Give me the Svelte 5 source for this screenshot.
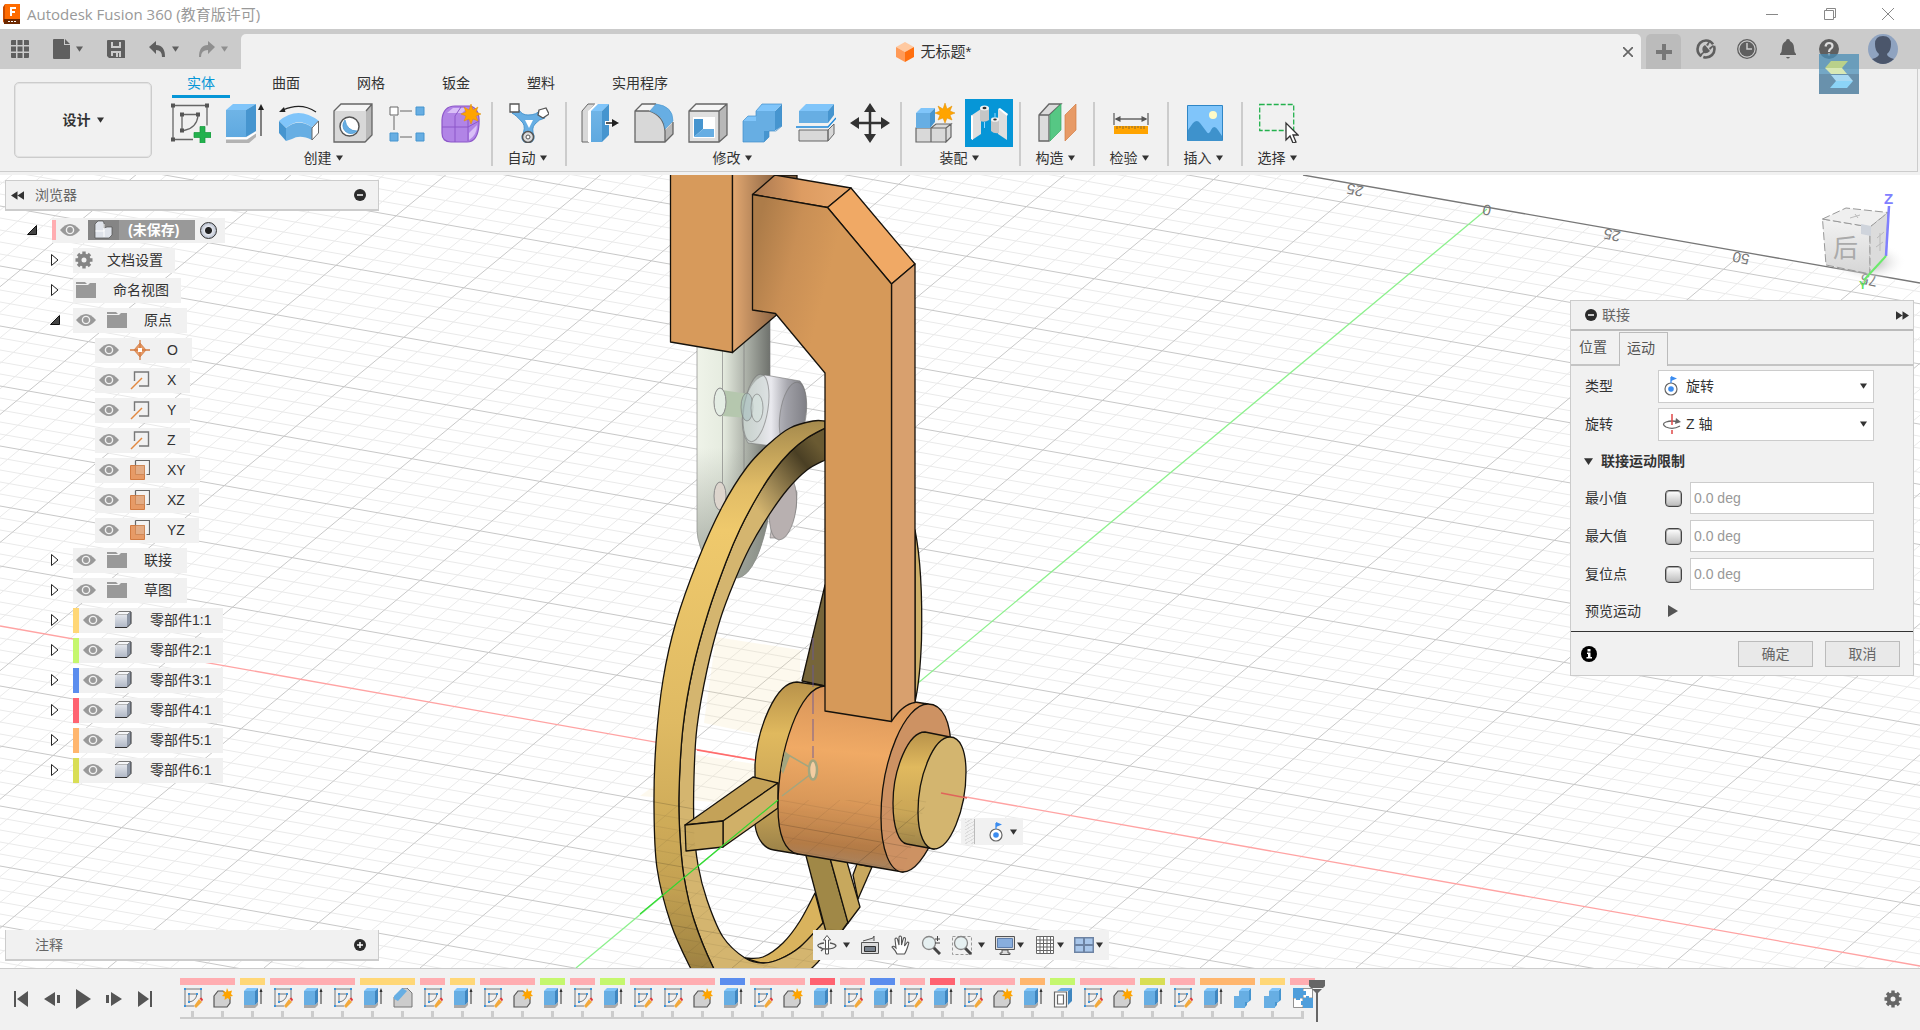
<script>
  const tabs = ['实体', '曲面', '网格', '钣金', '塑料', '实用程序'];

  const groups = [
    { label: '创建', wide: true, tools: ['sketch', 'extrude', 'revolve', 'hole', 'rect', 'form'] },
    { label: '自动', tools: ['auto'] },
    { label: '修改', wide: true, tools: ['press', 'fillet', 'shell', 'combine', 'split', 'move'] },
    { label: '装配', wide: true, tools: ['newcomp', 'joint'] },
    { label: '构造', tools: ['construct'] },
    { label: '检验', tools: ['measure'] },
    { label: '插入', tools: ['insert'] },
    { label: '选择', tools: ['select'] },
  ];

  const tree = [
    { cls: 'l1', icons: ['gear'], text: '文档设置', closed: true, kind: 'doc' },
    { cls: 'l1', icons: ['folder'], text: '命名视图', closed: true, kind: 'views' },
    { cls: 'l1', icons: ['eye', 'folder'], text: '原点', open: true, kind: 'fold' },
    { cls: 'l2', icons: ['eye', 'point'], text: 'O' },
    { cls: 'l2', icons: ['eye', 'axis'], text: 'X' },
    { cls: 'l2', icons: ['eye', 'axis'], text: 'Y' },
    { cls: 'l2', icons: ['eye', 'axis'], text: 'Z' },
    { cls: 'l2', icons: ['eye', 'plane'], text: 'XY' },
    { cls: 'l2', icons: ['eye', 'plane'], text: 'XZ' },
    { cls: 'l2', icons: ['eye', 'plane'], text: 'YZ' },
    { cls: 'l1', icons: ['eye', 'folder'], text: '联接', closed: true, kind: 'fold' },
    { cls: 'l1', icons: ['eye', 'folder'], text: '草图', closed: true, kind: 'fold' },
    ...['yellow', 'green', 'blue', 'red', 'orange', 'olive'].map((color, i) => ({
      cls: 'l1', icons: ['eye', 'body'], text: `零部件${i + 1}:1`, closed: true, color, kind: 'comp',
    })),
  ];

  const limits = [
    { id: 'min', label: '最小值' },
    { id: 'max', label: '最大值' },
    { id: 'rest', label: '复位点' },
  ];

  // [colour, number of slots]
  const runs = [
    ['pink', 2], ['yellow', 1], ['pink', 3], ['yellow', 2], ['pink', 1], ['yellow', 1], ['pink', 2],
    ['green', 1], ['pink', 1], ['green', 1], ['pink', 3], ['blue', 1], ['pink', 2], ['red', 1],
    ['pink', 1], ['blue', 1], ['pink', 1], ['red', 1], ['pink', 2], ['orange', 1], ['green', 1],
    ['pink', 2], ['olive', 1], ['pink', 1], ['orange', 2], ['yellow', 1], ['pink', 1],
  ];
  const kinds = { s: 't-sketch', c: 't-comp', e: 't-extrude', f: 't-chamfer', b: 't-shell', m: 't-combine', j: 't-joint' };
  const features = [...'scesesefsescesesscescesesescebscesemmj'].map((k) => kinds[k]);

  // Ground grid: two families of nearly parallel lines, five minor cells per major cell.
  const lineA = (k) => `M0 ${626 + 60 * k}L1920 ${966 + 60.2 * k}`;
  const lineB = (k) => `M${576 + 156 * k} 968L${1487 + 127.5 * k} ${209 + 22.4 * k}`;
  let minor = '';
  let major = '';
  for (let i = -56; i <= 29; i++) {
    if (i % 5 === 0) { if (i) major += lineA(i / 5); }
    else minor += lineA(i / 5);
  }
  for (let i = -52; i <= 48; i++) {
    if (i % 5 === 0) { if (i) major += lineB(i / 5); }
    else minor += lineB(i / 5);
  }

  // Catmull-Rom spline through the points, without its first move command.
  function curve(p) {
    let d = '';
    for (let i = 0; i < p.length - 1; i++) {
      const a = p[i - 1] ?? p[i], b = p[i], c = p[i + 1], e = p[i + 2] ?? c;
      d += `C${b[0] + (c[0] - a[0]) / 6} ${b[1] + (c[1] - a[1]) / 6} ${c[0] - (e[0] - b[0]) / 6} ${c[1] - (e[1] - b[1]) / 6} ${c[0]} ${c[1]}`;
    }
    return d;
  }
  const open = (p) => `M${p[0]}${curve(p)}`;
  const band = (a, b) => {
    const r = [...b].reverse();
    return `${open(a)}L${r[0]}${curve(r)}Z`;
  };
  const outer = [[825, 421], [813, 421], [790, 428], [770, 443], [747, 467], [722, 507], [698, 560], [676, 622], [663, 680], [656, 743], [654, 805], [657, 868], [671, 924], [690, 967], [704, 990]];
  const middle = [[825, 428], [807, 438], [790, 452], [773, 472], [757, 497], [740, 529], [726, 562], [708, 613], [693, 668], [683, 727], [679, 793], [680, 837], [684, 877], [694, 920], [713, 967], [728, 990]];
  const inner = [[825, 460], [807, 470], [787, 490], [767, 518], [750, 547], [735, 580], [720, 620], [707, 670], [697, 727], [694, 777], [694, 827], [698, 865], [707, 900], [723, 937], [745, 958], [763, 963], [780, 959], [800, 947], [823, 923]];
  const middleLow = [...middle, [760, 1000], [790, 985], [813, 967], [826, 952], [848, 923]];
  const innerBack = [[745, 958], [763, 957], [783, 943], [800, 921], [815, 893]];
  const innerFront = [[745, 958], [763, 963], [780, 959], [800, 947], [823, 923]];
  const ringA = band(outer, middle);
  const ringB = band(middleLow, inner);
  const barrel = 'M825 686C800 686 778 750 778 807C778 835 785 852 798 854L903 872L940 760L928 704L915 702Z';
</script>

{#snippet ic(name, cls = 'i20', box = '0 0 20 20')}
  <svg class={cls} viewBox={box} aria-hidden="true"><use href="#{name}" /></svg>
{/snippet}
{#snippet caret()}
  <svg class="caret" viewBox="0 0 8 6" aria-hidden="true"><path d="M0 0h8L4 6z" fill="currentColor" /></svg>
{/snippet}

<svg class="defs" aria-hidden="true">
  <defs>
    <linearGradient id="gblue" x1="0" y1="0" x2="0" y2="1"><stop offset="0" stop-color="#6fb4e6" /><stop offset="1" stop-color="#5fa9e0" /></linearGradient>
    <linearGradient id="gbody" x1="0" y1="0" x2="0" y2="1"><stop offset="0" stop-color="#e3e6ec" /><stop offset="1" stop-color="#aeb6c4" /></linearGradient>
  </defs>
  <symbol id="sketch" viewBox="0 0 40 40">
    <g fill="none" stroke="#666" stroke-width="1.3"><path d="M2 2.5h34v20M2 2.5v34h20M11 11.5h16M11 11.5v16M27 13c-1 8-6 13-14 14.500" /></g>
    <path fill="#555" d="M0 .5h4v4H0zM34 .5h4v4h-4zM0 34.500h4v4H0zM9 9.500h4v4H9zM25 9.500h4v4h-4zM9 25.500h4v4H9z" />
    <path fill="#23b14d" stroke="#15963a" stroke-width=".7" d="M29 23.500h5v6h6v5h-6v6h-5v-6h-6v-5h6z" />
  </symbol>
  <symbol id="extrude" viewBox="0 0 40 40">
    <path fill="#b3b3b3" d="M1 35h20l10-6v5l-7 6H1z" />
    <path fill="#fff" d="M1 34.500h20l10-6v2l-9 6H1z" />
    <path fill="url(#gblue)" d="M1 7h20v27H1z" /><path fill="#80c5fa" d="M1 7l7-6h23L21 7z" /><path fill="#4695cf" d="M21 7l10-6v27l-10 6z" />
    <path stroke="#222" stroke-width="1.100" d="M36 33V5" /><path fill="#222" d="M33 7l3-6 3 6z" />
  </symbol>
  <symbol id="revolve" viewBox="0 0 40 40">
    <path fill="#80c5fa" d="M0 18Q19 2 40 18l-7 6Q19 14 7 25z" /><path fill="#67aee3" d="M7 25q12-10 26-1v13q-12-6-20-1l-6 2z" /><path fill="#4695cf" d="M0 18l7 7v13l-7-8z" />
    <path fill="#fff" stroke="#666" d="M33 25l6.500-7v12L33 37z" /><path fill="none" stroke="#222" stroke-width="1.200" d="M37 9Q22-1 4 7" /><path fill="#222" d="M0 9l5-5 1.500 5z" />
  </symbol>
  <symbol id="hole" viewBox="0 0 40 40">
    <path fill="#f5f5f5" d="M1 8l7-7h31l-6 7z" /><path fill="#b8b8b8" d="M33 8l6-7v31l-6 7z" /><path fill="#d8d8d8" d="M1 8h32v31H1z" /><path fill="none" stroke="#666" stroke-width="1.300" d="M1 8l7-7h31v31l-7 7H1zM33 8l6-7" />
    <circle cx="16.500" cy="23.500" r="9.500" fill="#fff" stroke="#555" stroke-width="1.500" /><path fill="#67aee3" stroke="#4695cf" stroke-width=".7" d="M12 17a8 8 0 1 0 12 11Q14 28 12 17z" />
  </symbol>
  <symbol id="rect" viewBox="0 0 40 40">
    <path stroke="#666" d="M13 8h12M13 34h12M7 13v14" /><path fill="#fff" stroke="#666" d="M3 4h8v8H3z" /><path fill="#67aee3" stroke="#4695cf" d="M29 4h8v8h-8zM29 30h8v8h-8zM3 30h8v8H3z" />
  </symbol>
  <symbol id="star" viewBox="0 0 20 20"><path fill="#ffa400" stroke="#e08e00" stroke-width=".5" d="M10 0l2 6 5-3-2 5 5 2-5 2 2 5-5-2-2 5-2-5-5 2 2-5-5-2 5-2-2-5 5 3z" /></symbol>
  <symbol id="form" viewBox="0 0 40 40">
    <path fill="#b184e6" stroke="#8c57c9" stroke-width="1.200" d="M1 17Q2 3 14 3h15q10 2 9 18-1 18-12 18H10Q1 39 1 30z" /><path fill="#d9bff7" d="M6 10l6-5h14l-5 5zM28 30l8-8q0 10-8 15z" />
    <path fill="none" stroke="#8c57c9" d="M1 24h26l11-6M14 39V13l6-9M27 13v25" /><use href="#star" x="20" y="1" width="20" height="20" />
  </symbol>
  <symbol id="auto" viewBox="0 0 40 40">
    <path fill="#67aee3" stroke="#4695cf" d="M3 10q4 2 11 10 3 5-1 13-1 6 6 7 7-1 6-7-3-8 1-12 4-5 10-6l-5-8q-3 5-12 5-6 0-9-5z" /><path fill="#fff" d="M16 17h8l-4 8z" />
    <path fill="#fff" stroke="#555" stroke-width="1.300" d="M1 1h9v8H1zM30 7l7-2 3 6-6 4-5-3z" /><circle cx="19" cy="34" r="5.500" fill="#ddd" stroke="#555" stroke-width="1.500" /><circle cx="19" cy="34" r="2" fill="#fff" stroke="#555" />
  </symbol>
  <symbol id="press" viewBox="0 0 40 40">
    <path fill="#d9d9d9" stroke="#666" d="M2 8l6-7h7L9 8v31H2z" /><path fill="#fff" d="M8 8l7-7h3l-7 7v31H8z" /><path fill="url(#gblue)" d="M11 8h11v31H11z" /><path fill="#80c5fa" d="M11 8l7-7h11l-7 7z" /><path fill="#4695cf" d="M22 8l7-7v31l-7 7z" />
    <path stroke="#fff" stroke-width="4" d="M25 20h13" /><path stroke="#222" stroke-width="1.500" d="M26 20h8" /><path fill="#222" d="M32 16l7 4-7 4z" />
  </symbol>
  <symbol id="fillet" viewBox="0 0 40 40">
    <path fill="#f5f5f5" d="M1 8l7-7h12L15 8z" /><path fill="#d8d8d8" d="M1 8h14q16 5 16 22v9H1z" /><path fill="#b8b8b8" d="M31 27l8-8v12l-8 8z" /><path fill="none" stroke="#666" stroke-width="1.300" d="M22 1H8L1 8v31h30l8-8V19M1 8h14q15 5 16 20v11" /><path fill="#67aee3" stroke="#4695cf" stroke-width=".6" d="M22 1q17 2 17 17l-8 8Q30 12 16 8z" />
  </symbol>
  <symbol id="shell" viewBox="0 0 40 40">
    <path fill="#f5f5f5" d="M1 8l7-7h31l-6 7z" /><path fill="#b8b8b8" d="M31 8l8-7v31l-8 7z" /><path fill="#e0e0e0" d="M1 8h30v31H1z" /><path fill="none" stroke="#666" stroke-width="1.300" d="M1 8l7-7h31v31l-8 7H1zM31 8v31M1 8h30l8-7" /><path fill="#fff" d="M5 14h22v21H5z" /><path fill="#4695cf" d="M6 16h9v10l-9 8z" /><path fill="#67aee3" d="M6 34l9-8h11v8z" />
  </symbol>
  <symbol id="combine" viewBox="0 0 40 40">
    <path fill="#4695cf" d="M33 8l7-7v22l-6 4h-7v7l-5 5V15z" /><path fill="#67aee3" d="M1 18h13V8h19v20H22v11H1z" /><path fill="#80c5fa" d="M14 8l6-7h20l-7 7zM1 18l5-5h8v5z" /><path fill="none" stroke="#3f8dc9" stroke-width=".7" d="M1 18l5-5h8V8l6-7h20v22l-6 5h-7v6l-5 5H1z" />
  </symbol>
  <symbol id="split" viewBox="0 0 40 40">
    <path fill="#67aee3" d="M3 8h29v12H3z" /><path fill="#80c5fa" d="M3 8l7-7h28l-6 7z" /><path fill="#4695cf" d="M32 8l6-7v11l-6 8z" /><path fill="none" stroke="#1b87d9" stroke-width="1.300" d="M0 24h32l8-9" /><path fill="#d8d8d8" stroke="#666" d="M3 27h29v11H3zM32 27l6-6v10l-6 7z" />
  </symbol>
  <symbol id="move" viewBox="0 0 40 40"><path stroke="#333" stroke-width="2.500" d="M20 6v28M6 20h28" /><path fill="#333" d="M20 0l6 9H14zM20 40l6-9H14zM0 20l9-6v12zM40 20l-9-6v12z" /></symbol>
  <symbol id="newcomp" viewBox="0 0 40 40">
    <path fill="#d9d9d9" stroke="#666" stroke-width="1.200" d="M1 25h15v14H1zM16 25l5-4h15l-5 4zM16 25h15v14H16zM31 25l5-4v13l-5 5z" /><path fill="#67aee3" d="M1 10h14v15H1z" /><path fill="#80c5fa" d="M1 10l5-5h14l-5 5z" /><path fill="#4695cf" d="M15 10l5-5v14l-5 6z" /><use href="#star" x="20" y="0" width="20" height="20" />
  </symbol>
  <symbol id="joint" viewBox="0 0 40 40">
    <path fill="#dedede" d="M3 12l9-6v25l-9 6z" /><path fill="#c6c6c6" d="M11 5h9v12q-4 3-9 1z" /><ellipse cx="15.500" cy="5" rx="4.500" ry="2.500" fill="#f4f4f4" />
    <path fill="#dedede" d="M38 12l-9-6v25l9 6z" /><path fill="#c6c6c6" d="M22 17h8v13q-5 1-8-2z" /><ellipse cx="26" cy="16.500" rx="4" ry="2.300" fill="#f4f4f4" />
    <path fill="#fff" d="M2 12l2 1v24l-2-1zM29 6l2-1 8 6-1 2z" /><ellipse cx="15.500" cy="5" rx="2" ry="1.200" fill="#333" /><ellipse cx="26" cy="16.500" rx="1.800" ry="1" fill="#333" /><path stroke="#8fd6ff" d="M15.500 19v6M26 10v5" />
  </symbol>
  <symbol id="construct" viewBox="0 0 40 40">
    <path fill="#dcdcdc" stroke="#666" stroke-width="1.300" d="M2 12L12 1h12L12 12v26H2zM2 12h10" /><path fill="#56c784" stroke="#3aa966" stroke-width=".7" d="M13 12L24 1v26L13 38z" /><path fill="#e79a66" stroke="#d27b42" stroke-width=".7" d="M28 12L39 1v26L28 38z" />
  </symbol>
  <symbol id="measure" viewBox="0 0 40 40">
    <path stroke="#666" stroke-width="1.300" d="M3 10v12M37 10v12M5 16h30" /><path fill="#555" d="M3.500 16l6-3v6zM36.500 16l-6-3v6z" /><path fill="#ffa400" d="M3 23h34v8H3z" /><path stroke="#8b6a2f" d="M6 23v3M9 23v2M12 23v3M15 23v2M18 23v3M21 23v2M24 23v3M27 23v2M30 23v3M33 23v3" />
  </symbol>
  <symbol id="insert" viewBox="0 0 40 40"><path fill="#80c5fa" stroke="#2f86c6" d="M2.500 2.500h35v35h-35z" /><circle cx="28" cy="12" r="4" fill="#fffbc8" /><path fill="#3e92cc" d="M3 27l5-7q4-4 7 0l6 8q3 5 5-1 3-6 7 0l4 6v5H3z" /></symbol>
  <symbol id="select" viewBox="0 0 40 40"><path fill="none" stroke="#23b14d" stroke-width="1.300" stroke-dasharray="5 2" d="M.7 1.500h34v26H.7z" /><path fill="#fff" stroke="#333" stroke-width="1.300" d="M27 20v17l4-4 3 7 3-1-3-7h5z" /></symbol>

  <symbol id="eye" viewBox="0 0 20 20"><path fill="#999" d="M0 10Q10-2 20 10 10 22 0 10z" /><circle cx="10" cy="10" r="3.600" fill="none" stroke="#f1f1f1" stroke-width="1.400" /></symbol>
  <symbol id="folder" viewBox="0 0 20 20"><path fill="#999" d="M0 2h9l2 2H0zM0 5h12l2-2h6v15H0z" /></symbol>
  <symbol id="gear" viewBox="0 0 20 20"><circle cx="10" cy="10" r="4.500" fill="none" stroke="currentColor" stroke-width="4" /><path stroke="currentColor" stroke-width="3.400" d="M10 1.500v3M10 15.500v3M1.500 10h3M15.500 10h3M4 4l2 2M14 14l2 2M4 16l2-2M14 6l2-2" /></symbol>
  <symbol id="point" viewBox="0 0 20 20"><path fill="#e79a66" stroke="#d27b42" stroke-width=".8" d="M10 3l6 7-6 7-6-7z" /><path stroke="#d27b42" stroke-width="1.300" d="M10 0v20M0 10h20" /><path fill="#fff" d="M8 8h4v4H8z" /></symbol>
  <symbol id="axis" viewBox="0 0 20 20"><path fill="none" stroke="#777" stroke-width="1.400" d="M4.500 11V2h14v14H9" /><path stroke="#e2873f" stroke-width="1.400" d="M1 19L12 8" /></symbol>
  <symbol id="plane" viewBox="0 0 20 20"><path fill="#e79a66" stroke="#d27b42" d="M.5 5.500h14v14H.5z" /><path fill="#ffffff33" stroke="#666" stroke-width="1.200" d="M5.500.5h14v14h-3M5.500.5v5" /><path fill="#e3ac85" stroke="#c98352" stroke-width=".8" d="M5.500 5.500h9v9h-9z" /></symbol>
  <symbol id="body" viewBox="0 0 20 20"><path fill="#f6f7f9" stroke="#777" d="M2 5l4-3.500h12L14 5z" /><path fill="url(#gbody)" d="M2 5h12v12.500H2z" /><path fill="#8d96a5" d="M14 5l4-3.500v12l-4 4z" /><path fill="none" stroke="#333" d="M2 17.500h12l4-4V2" /></symbol>
  <symbol id="assembly" viewBox="0 0 20 20"><path fill="#dfe3ea" stroke="#4d4d4d" stroke-width=".7" d="M1 4l3-3h5l1 2v5l3-1h5v8l-3 3H1z" /><path fill="none" stroke="#fff" d="M1.500 11h8.500V4M10 10v7" /></symbol>
  <symbol id="minus" viewBox="0 0 12 12"><circle cx="6" cy="6" r="6" fill="#2b2b2b" /><path stroke="#fff" stroke-width="1.500" d="M3 6h6" /></symbol>
  <symbol id="plus" viewBox="0 0 12 12"><circle cx="6" cy="6" r="6" fill="#2b2b2b" /><path stroke="#fff" stroke-width="1.500" d="M3 6h6M6 3v6" /></symbol>
  <symbol id="revjoint" viewBox="0 0 20 20"><circle cx="9" cy="13" r="6" fill="#fff" stroke="#666" stroke-width="1.200" /><circle cx="9" cy="13" r="2.800" fill="#3b8cf0" /><path stroke="#3b8cf0" stroke-width="1.300" d="M9 7V1" /><path fill="#3b8cf0" d="M9 0l6 2.500L9 5z" /></symbol>
  <symbol id="zaxis" viewBox="0 0 20 20"><path fill="none" stroke="#666" stroke-width="1.300" d="M18 12q-7 4-14 1-5-3 0-5 6-2 12 0" /><path fill="#666" d="M14 4l5 4-6 2z" /><path stroke="#e04848" stroke-width="1.500" d="M10 0v11M10 16v4" /></symbol>

  <symbol id="t-sketch" viewBox="0 0 20 20"><path fill="none" stroke="#777" d="M2 1v17M2 1h16M18 1v10M2 18h9M6 6h8M6 6v8M14 6q-1 7-8 8" /><path fill="#3b94dd" d="M1 0h2v2H1zM17 0h2v2h-2zM1 17h2v2H1zM5 5h2v2H5zM13 5h2v2h-2zM5 13h2v2H5z" /><path fill="#f2a93b" d="M16 11l3 3-6 6-2-2z" /><path fill="#e23b3b" d="M16.500 10.500l2-1 1.500 2-1 2z" /></symbol>
  <symbol id="t-comp" viewBox="0 0 20 20"><path fill="#d0d0d0" stroke="#555" stroke-width="1.200" d="M1 8l4-5h5l7 6v6l-3 4H1z" /><path fill="#ffa400" d="M14 0l1.500 3.500L19 2.500l-1 3.500 2 2-3 .5.500 3.500-3-2-3 2 .500-3.500-3-.500 2-2-1-3 3 1z" /></symbol>
  <symbol id="t-extrude" viewBox="0 0 20 20"><path fill="#aaa" d="M1 17h11l3-3v3l-3 3H1z" /><path fill="#67aee3" d="M1 3h11v14H1z" /><path fill="#80c5fa" d="M1 3l3-3h11l-3 3z" /><path fill="#4087c0" d="M12 3l3-3v14l-3 3z" /><path stroke="#333" d="M18 2v14" /><path fill="#333" d="M16.500 4L18 0l1.500 4z" /></symbol>
  <symbol id="t-chamfer" viewBox="0 0 20 20"><path fill="#ccc" stroke="#777" d="M1 9L10 0h4l5 5v14H1z" /><path fill="#67aee3" d="M1 8L9 0l5 3-9 10-4-2z" /></symbol>
  <symbol id="t-shell" viewBox="0 0 20 20"><path fill="#67aee3" d="M4 3l4-3h11l-4 3z" /><path fill="#4087c0" d="M15 3l4-3v13l-4 4z" /><path fill="#fff" stroke="#666" stroke-width="1.200" d="M1.500 4h12v15h-12zM4.500 7h6v9h-6z" /></symbol>
  <symbol id="t-combine" viewBox="0 0 20 20"><path fill="#4695cf" d="M15 3l3-3v12l-4 3v2l-3 3V7z" /><path fill="#67aee3" d="M1 8h5V3h10v11h-4v6H1z" /><path fill="#80c5fa" d="M6 3l3-3h9l-3 3z" /></symbol>
  <symbol id="t-joint" viewBox="0 0 20 20"><path fill="#fff" stroke="#777" stroke-width=".8" d="M10 .5h9.500V10H10zM.5 10H10v9.500H.5z" /><path fill="#4f9edb" d="M0 0h10v3h3v4h-3v3H7v2H3v-2H0zM10 13h-2v4h2v3h10V10h-4V8h-3v2h-3z" /></symbol>
</svg>

<div class="app">
  <header class="title">
    <svg class="i20" viewBox="0 0 20 20" aria-hidden="true"><path fill="#ff6b00" d="M3 0h15v16H3z" /><path fill="#c94b00" d="M1 3l2-3v16l-2 3z" /><path fill="#6d2900" d="M2 15h16v5H2z" /><path fill="none" stroke="#fff" stroke-width="2" d="M9 12V4h5M9 8h4" /><path stroke="#fff" stroke-dasharray="2 1" d="M6 17.500h8" /></svg>
    <h1>Autodesk Fusion 360 (教育版许可)</h1>
    <div class="window">
      <button aria-label="最小化"><svg viewBox="0 0 12 12"><path d="M0 6.500h12" /></svg></button>
      <button aria-label="还原"><svg viewBox="0 0 12 12"><path d="M.5 2.500h9v9h-9zM2.500 2.500v-2h9v9h-2" /></svg></button>
      <button aria-label="关闭"><svg viewBox="0 0 12 12"><path d="M0 0l12 12M12 0L0 12" /></svg></button>
    </div>
  </header>

  <div class="tabbar">
    <div class="quick">
      <button aria-label="数据面板"><svg viewBox="0 0 18 18"><path d="M0 1q0-1 1-1h4v5H0zM6.500 0h5v5h-5zM13 0h4q1 0 1 1v4h-5zM0 6.500h5v5H0zM6.500 6.500h5v5h-5zM13 6.500h5v5h-5zM0 13h5v5H1q-1 0-1-1zM6.500 13h5v5h-5zM13 13h5v4q0 1-1 1h-4z" /></svg></button>
      <button class="drop" aria-label="文件"><svg viewBox="0 0 18 20"><path d="M1 0h10v6h6v13q0 1-1 1H1q-1 0-1-1V1q0-1 1-1zM12 0l5 5h-5z" /></svg>{@render caret()}</button>
      <button aria-label="保存"><svg viewBox="0 0 18 18"><path fill-rule="evenodd" d="M1 0h16q1 0 1 1v17H2l-2-2V1q0-1 1-1zM4 2v6h10V2h-2v4H6V2zM4 11v5h2v-3h3v4h2v-4h1v4h2v-6z" /></svg></button>
      <button class="drop" aria-label="撤消"><svg viewBox="0 0 18 16"><path d="M0 6l7-6v4q9 0 9 12h-3q0-7-6-7v4z" /></svg>{@render caret()}</button>
      <button class="drop off" aria-label="恢复"><svg viewBox="0 0 18 16"><path d="M17 6l-7-6v4Q1 4 1 16h2q0-7 7-7v4z" /></svg>{@render caret()}</button>
    </div>
    <div class="doctab">
      <span class="docname"><svg class="i20" viewBox="0 0 20 20" aria-hidden="true"><path fill="#ffc9a0" d="M10 0l9 5-9 5-9-5z" /><path fill="#ff9a57" d="M1 5l9 5v10l-9-5z" /><path fill="#ff6f0f" d="M19 5l-9 5v10l9-5z" /></svg>无标题*</span>
      <button aria-label="关闭文档"><svg viewBox="0 0 10 10"><path stroke="#666" stroke-width="1.700" d="M0 0l10 10M10 0L0 10" /></svg></button>
    </div>
    <button class="newtab" aria-label="新建"><svg viewBox="0 0 16 16"><path d="M6 0h4v6h6v4h-6v6H6v-6H0V6h6z" /></svg></button>
    <div class="status">
      <button aria-label="扩展"><svg viewBox="0 0 20 20"><circle cx="10" cy="10" r="8.500" fill="none" stroke="#5f5f5f" stroke-width="2.600" stroke-dasharray="16 2 30 2" /><path d="M3 16l4-3q-2-5 2-7l5 6q-3 3-6 2l-4 4zM10 6l3-4 1 1-2 4zM13 9l4-3 1 1-4 4z" /></svg></button>
      <button aria-label="作业状态"><svg viewBox="0 0 20 20"><circle cx="10" cy="10" r="9.300" fill="none" stroke="#5f5f5f" stroke-width="1.300" /><circle cx="10" cy="10" r="7.500" /><path fill="none" stroke="#ccc" stroke-width="1.500" d="M10 4v6h5" /></svg></button>
      <button aria-label="通知"><svg viewBox="0 0 20 20"><path d="M10 0q2 0 2 2 4 2 4 7 0 4 2 6v1H2v-1q2-2 2-6 0-5 4-7 0-2 2-2zM8 18h4q-2 3-4 0z" /></svg></button>
      <button class="help" aria-label="帮助"><svg viewBox="0 0 20 20"><circle cx="10" cy="10" r="10" /><path fill="none" stroke="#ddd" stroke-width="2.200" d="M6.500 7.500q.5-3.500 3.500-3.500 3.500 0 3.500 3 0 2-2 3-1.500 1-1.500 3M10 14.500v2" /></svg>
        <svg class="badge" viewBox="0 0 40 40"><path fill="#4a8db5" fill-opacity=".75" d="M0 0h40v40H0z" /><path fill="#5d7c93" fill-opacity=".5" d="M0 20h40v20H0z" /><path fill="#b9d08a" d="M12 7h17l-6 7H6z" /><path fill="#d8e8b5" d="M6 14h17l5 6H12z" /><path fill="#a9d9f2" d="M12 21h17l5 6H17z" /><path fill="#8cd4f7" d="M17 27h17l-6 7H11z" /></svg>
      </button>
      <button class="avatar" aria-label="账户"><svg viewBox="0 0 30 30"><circle cx="15" cy="15" r="15" fill="#8fa3c0" /><path fill="#4b566b" d="M7 10q0-8 8-8t8 8q0 7-4 10 0 3 7 5-11 10-22 0 7-2 7-5-4-3-4-10z" /></svg></button>
    </div>
  </div>

  <div class="ribbon">
    <button class="design">设计 {@render caret()}</button>
    <div class="ribmain">
      <nav>
        {#each tabs as t, i}<button class:active={i === 0}>{t}</button>{/each}
      </nav>
      <div class="groups">
        {#each groups as g}
          <div class="group" class:wide={g.wide}>
            <div class="tools">
              {#each g.tools as t}
                <button class="tool" class:on={t === 'joint'} aria-label={t}>{@render ic(t, 'i40', '0 0 40 40')}</button>
              {/each}
            </div>
            <button class="glabel">{g.label} {@render caret()}</button>
          </div>
        {/each}
      </div>
    </div>
  </div>

  <main>
    <svg class="scene" viewBox="0 175 1920 793" preserveAspectRatio="xMidYMid slice" role="img" aria-label="模型">
      <defs>
        <clipPath id="ground"><path d="M0 175H1303L1920 283V968H0z" /></clipPath>
        <clipPath id="lower"><path d="M640 800h340v170H640z" /></clipPath>
        <clipPath id="solid"><path d={ringA} /><path d={ringB} /><path d={barrel} /></clipPath>
        <linearGradient id="gx" x1="0" x2="1"><stop offset="0" stop-color="#e2a871" /><stop offset="1" stop-color="#8a6342" /></linearGradient>
        <linearGradient id="garm" gradientUnits="userSpaceOnUse" x1="752" y1="250" x2="830" y2="270"><stop offset="0" stop-color="#ad7c49" /><stop offset=".5" stop-color="#c98f55" /><stop offset="1" stop-color="#d69959" /></linearGradient>
        <linearGradient id="gtop" x1="0" x2="1"><stop offset="0" stop-color="#a97850" /><stop offset=".5" stop-color="#dd9c62" /><stop offset="1" stop-color="#e8a86c" /></linearGradient>
        <linearGradient id="gra" gradientUnits="userSpaceOnUse" x1="0" y1="421" x2="0" y2="968"><stop offset="0" stop-color="#a58a4d" /><stop offset=".12" stop-color="#e1bc66" /><stop offset=".2" stop-color="#efc96c" /><stop offset=".55" stop-color="#dfba63" /><stop offset=".85" stop-color="#c4a253" /><stop offset="1" stop-color="#9e8242" /></linearGradient>
        <linearGradient id="grb" gradientUnits="userSpaceOnUse" x1="826" y1="455" x2="758" y2="510"><stop offset="0" stop-color="#6a5a32" /><stop offset=".25" stop-color="#4a3f24" /><stop offset=".75" stop-color="#a8905a" /><stop offset="1" stop-color="#d4b56f" /></linearGradient>
        <linearGradient id="gbar" gradientUnits="userSpaceOnUse" x1="830" y1="690" x2="815" y2="862"><stop offset="0" stop-color="#d8955a" /><stop offset=".35" stop-color="#f0aa65" /><stop offset=".65" stop-color="#d99859" /><stop offset=".9" stop-color="#b37b47" /><stop offset="1" stop-color="#a8835f" /></linearGradient>
        <linearGradient id="ghub" x1="0" y1="0" x2="0" y2="1"><stop offset="0" stop-color="#b8924a" /><stop offset=".3" stop-color="#e0b95e" /><stop offset=".7" stop-color="#c9a557" /><stop offset="1" stop-color="#9a8148" /></linearGradient>
        <linearGradient id="gplate" x1="0" x2="1"><stop offset="0" stop-color="#eff3e9" /><stop offset=".35" stop-color="#e6ece0" /><stop offset=".65" stop-color="#b0b5ac" /><stop offset="1" stop-color="#6f726d" /></linearGradient>
        <linearGradient id="gdeep" x1="0" y1="0" x2="0" y2="1"><stop offset=".5" stop-color="#8f958c" stop-opacity="0" /><stop offset="1" stop-color="#8f958c" stop-opacity=".8" /></linearGradient>
        <linearGradient id="gknob" x1="0" x2="1"><stop offset="0" stop-color="#bfc9c2" /><stop offset=".45" stop-color="#e9e9ee" /><stop offset=".7" stop-color="#a9a9b0" /><stop offset="1" stop-color="#77777c" /></linearGradient>
        <linearGradient id="gcube" x1="0" y1="0" x2="0" y2="1"><stop offset="0" stop-color="#f2f2f2" /><stop offset="1" stop-color="#d6d6d6" /></linearGradient>
        <radialGradient id="gshade"><stop offset="0" stop-color="#999" /><stop offset="1" stop-color="#fff" stop-opacity="0" /></radialGradient>
      </defs>
      <path fill="#fff" d="M0 175h1920v793H0z" />
      <g clip-path="url(#ground)" fill="none">
        <path d={minor} stroke="#eaeaea" /><path d={major} stroke="#c8c8c8" />
        <path d="M0 626L1920 966" stroke="#ffa3a3" stroke-width="1.300" /><path d="M576 968L1487 209" stroke="#8cf08c" stroke-width="1.300" />
      </g>
      <path d="M1303 175L1920 283" stroke="#777" stroke-width="1.300" />
      <g fill="#777" font-size="15" text-anchor="middle" font-family="Liberation Sans, sans-serif">
        <text transform="translate(1356 185) rotate(192)">25</text><text transform="translate(1488 205) rotate(192)">0</text><text transform="translate(1613 230) rotate(192)">25</text><text transform="translate(1742 253) rotate(192)">50</text><text transform="translate(1870 275) rotate(192)">75</text>
      </g>
      <ellipse cx="1868" cy="262" rx="38" ry="20" fill="url(#gshade)" />
      <g stroke="#999" stroke-dasharray="8 3">
        <path fill="url(#gcube)" d="M1822.500 219L1870 227v47l-44-9z" /><path fill="#efefef" d="M1822.500 219l23.500-11 42 4.500-18 14.500z" /><path fill="#dcdcdc" d="M1870 227l18-14.500-2 43.500-16 18z" />
      </g>
      <path fill="#cfd4dc" d="M1861 224l10 2v10l-10-2z" />
      <path fill="none" stroke="#bbb" d="M1850 218l10-3M1855 214l3 4M1877 238l7-6M1880 233v18M1876 247l7-5" />
      <path fill="none" stroke="#8080ff" stroke-width="2.500" d="M1889 206l-3 50" /><path stroke="#6bea6b" stroke-width="2" d="M1886 256l-22 24" />
      <g font-family="Liberation Sans, Noto Sans CJK SC, sans-serif"><text x="1833" y="257" font-size="25" fill="#aaa">后</text><text x="1884" y="204" font-size="15" font-weight="700" fill="#8080ff">Z</text><text x="1859" y="289" font-size="11" font-weight="700" fill="#5fe25f">Y</text></g>

      <g stroke="#77777799">
        <path fill="url(#gplate)" d="M697 345L770 318V510Q758 574 738 578L712 574Q697 545 697 530z" /><path fill="url(#gdeep)" stroke="none" d="M697 345L770 318V510Q758 574 738 578L712 574Q697 545 697 530z" /><path fill="none" d="M722.500 350V520M744 340V490" />
        <path fill="#b5c7ae" stroke="none" d="M722 390l26 4v24l-26-2z" /><ellipse cx="720" cy="402" rx="6" ry="14" fill="#e4ede4" stroke="#888" /><ellipse cx="720" cy="496" rx="6" ry="14" fill="#ddd5cd" stroke="#888" />
        <path fill="#c9c1c1" d="M770 538h10Q798 525 797 492L780 470z" /><ellipse cx="783" cy="508" rx="13" ry="32" fill="#b8b0b0" transform="rotate(8 783 508)" />
        <path fill="url(#gknob)" d="M765 375L800 381Q808 390 806 412 803 440 790 448L748 443Q740 432 743 410 748 380 765 375z" />
        <ellipse cx="756" cy="408" rx="12" ry="34" fill="#d0dad666" transform="rotate(9 756 408)" /><ellipse cx="793" cy="415" rx="13" ry="33" fill="#8f8f9666" transform="rotate(8 793 415)" /><ellipse cx="747" cy="407" rx="6" ry="14" fill="#a9bfc099" /><ellipse cx="757" cy="408" rx="6" ry="14" fill="#d5e3de99" />
      </g>

      <g fill="#f6d99a" fill-opacity=".17"><path d="M716 637l84 13v93l-96-20zM697 755l90 14-50 35-97-8z" /></g>

      <g stroke="#16120c" stroke-width="1.300" stroke-linejoin="round">
        <path fill="#cdb06a" d="M915 530Q923 570 921.500 640 920 680 915 702z" />
        <path fill="#c8a85e" d="M853 875l4-11 15 3-14 32z" />
        <path fill="#d9b35d" d={band(innerBack, innerFront)} />
        <path fill="url(#grb)" d={ringB} />
        <path fill="url(#gra)" d={ringA} />
        <path fill="#76653a" d="M802 681L825 585V686z" />
        <path fill="#a08847" d="M805 852l25 6 18 64-7 10h-15z" /><path fill="#c7a85d" d="M830 858l17 4 13 45-12 16z" />
        <path fill="url(#ghub)" d="M825 686L797 682C775 682 757 730 755 765V825C757 840 765 849 774 850L798 854L820 760z" />
        <path fill="#c4a258" d="M685 825l68-48 25 6-55 38z" /><path fill="#d0b068" d="M723 821l55-38v25l-55 39z" /><path fill="#c9a95f" d="M685 825l38-4v26l-37 4z" />
        <path fill="url(#gbar)" d={barrel} />
        <path fill="#cd9263" d="M928 704C905 704 881 760 881 817C881 850 890 872 903 872C925 872 951 810 951 750C951 722 943 704 928 704Z" />
        <path fill="url(#ghub)" d="M950 737L925 732C908 732 893 770 893 803C893 828 899 843 907 844L934 849L950 780z" />
        <path fill="#d3b56f" d="M950 737C934 737 918 775 918 812C918 835 925 849 934 849C950 849 966 810 966 772C966 750 960 737 950 737Z" />
        <path fill="#7a593b" d="M732.500 175H797v4l-30 20z" /><path fill="#d79a5b" d="M670.500 174h62v178.500l-62-10.500z" /><path fill="url(#gx)" d="M732.500 174h43v138l1 3-44 37.500z" />
        <path fill="url(#gtop)" d="M752.500 194.500L775 175l76 13-23.500 19.500z" /><path fill="#f0a965" d="M827.500 207.500L851 188l64 76-23.500 20z" />
        <path fill="#d8a06e" d="M891.500 284L915 264V702.500Q903 704 891.500 721.500z" />
        <path fill="url(#garm)" d="M752.500 194.500l75 13 64 76.500v437.500L825 711V373l-49.500-59.500-23-3.500z" />
      </g>
      <g clip-path="url(#lower)"><g clip-path="url(#solid)" opacity=".16" fill="none" stroke="#000"><path d={minor} opacity=".4" /><path d={major} /></g></g>
      <path d="M640 914L778 800" stroke="#30d830" stroke-width="1.200" /><path d="M697 750l58 10" stroke="#ff6b6b" stroke-width="1.500" /><path d="M941 793l26 5" stroke="#e0645a" stroke-width="1.300" />
      <path d="M813 638v120" stroke="#6a5a9a" stroke-opacity=".6" stroke-dasharray="22 5" stroke-width="1.500" />
      <path fill="none" stroke="#a3a67f" stroke-width="1.500" d="M811 768l-26-15M811 774l-29 22" /><path fill="#a3a67f" d="M785 751l5 5-7 18-2-4z" /><ellipse cx="813" cy="770" rx="4" ry="9.500" fill="#f3cda2" stroke="#a3a67f" stroke-width="2.500" />
    </svg>

    <section class="browser">
      <div class="panelhead"><button aria-label="折叠"><svg viewBox="0 0 14 9"><path fill="#333" d="M7 0v9L0 4.500zM14 0v9L7 4.500z" /></svg></button><h2>浏览器</h2><button aria-label="最小化浏览器">{@render ic('minus', 'i12', '0 0 12 12')}</button></div>
      <ul>
        <li class="root">
          <button class="tw" aria-label="收拢"><svg viewBox="0 0 10 10"><path fill="#444" stroke="#111" d="M9.500 .5v9h-9z" /></svg></button>
          <div class="box"><i class="bar pink"></i>{@render ic('eye')}<span class="sel"><span class="selic">{@render ic('assembly')}</span><b>(未保存)</b></span><input type="radio" checked aria-label="激活部件" /></div>
        </li>
        {#each tree as r}
          <li class={r.cls}>
            {#if r.closed}<button class="tw" aria-label="展开"><svg viewBox="0 0 10 12"><path fill="#fff" stroke="#222" d="M1.500 .5L8 6l-6.500 5.500z" /></svg></button>
            {:else if r.open}<button class="tw" aria-label="收拢"><svg viewBox="0 0 10 10"><path fill="#444" stroke="#111" d="M9.500 .5v9h-9z" /></svg></button>{/if}
            <div class="box {r.kind ?? 'geo'}">
              {#if r.color}<i class="bar {r.color}"></i>{/if}
              {#each r.icons as n}<span class="cell">{@render ic(n)}</span>{/each}
              <span class="name">{r.text}</span>
            </div>
          </li>
        {/each}
      </ul>
    </section>

    <section class="notes panelhead"><h2>注释</h2><button aria-label="展开注释">{@render ic('plus', 'i12', '0 0 12 12')}</button></section>

    <div class="mini"><i class="grip"></i><button aria-label="联接类型">{@render ic('revjoint')}{@render caret()}</button></div>

    <div class="navbar">
      <button class="far" aria-label="动态观察"><svg viewBox="0 0 20 20"><path fill="#fff" stroke="#555" d="M8.500 19V5h-2L10 .5 13.500 5h-2v14z" /><path fill="none" stroke="#555" stroke-width="1.300" d="M7 8Q0 9 1 11q2 3 9 3t9-3q0-2-6-3M4 16l2-2-3-2" /></svg>{@render caret()}</button>
      <button aria-label="观察"><svg viewBox="0 0 20 20"><path fill="#ddd" stroke="#555" d="M1.500 7.500h17v11h-17zM3 6l10-3 1-2v5" /><path fill="#78818c" stroke="#333" d="M4.500 11.500h11v5h-11z" /></svg></button>
      <button aria-label="平移"><svg viewBox="0 0 20 20"><path fill="#fff" stroke="#555" stroke-width="1.100" d="M6 19q-1-3-5-7 1-2 4 1L4 4q1-2 2.500 0L8 10 8 2q1-2 2.500 0v8l2-7q2-1 2 1l-1 7 3-4q2 0 1 2-2 7-4 10z" /></svg></button>
      <button aria-label="缩放"><svg viewBox="0 0 20 20"><path stroke="#444" stroke-width="3" d="M12 12l7 7" /><circle cx="8" cy="8" r="6.500" fill="#e6f0f1" stroke="#888" stroke-width="1.300" /><path stroke="#444" d="M14 4h5M16.500 1v5M14 8h5" /></svg></button>
      <button class="far" aria-label="窗口缩放"><svg viewBox="0 0 20 20"><path fill="none" stroke="#999" stroke-dasharray="3 2" d="M.5 1.500h19v18H.5z" /><path stroke="#444" stroke-width="3" d="M13 13l6 6" /><circle cx="9" cy="8" r="6.500" fill="#e6f0f1" stroke="#888" stroke-width="1.300" /></svg>{@render caret()}</button>
      <button aria-label="显示设置"><svg viewBox="0 0 20 20"><path fill="#ddd" stroke="#555" d="M.5 1.500h19v13H.5zM7 15h6v3h2v1.500H5V18h2z" /><path fill="#88aede" stroke="#5f7fae" d="M2.500 3.500h15v9h-15z" /></svg>{@render caret()}</button>
      <button aria-label="栅格"><svg viewBox="0 0 20 20"><path fill="#fff" stroke="#666" d="M1.500 1.500h17v17h-17zM5 1v18M8.500 1v18M12 1v18M15.500 1v18M1 5h18M1 8.500h18M1 12h18M1 15.500h18" /></svg>{@render caret()}</button>
      <button aria-label="视口"><svg viewBox="0 0 20 20"><path fill="#6d83a3" d="M0 2h20v16H0z" /><path fill="#a8c6ea" d="M1.500 3.500h7.500v5.500H1.500zM11 3.500h7.500v5.500H11zM1.500 11h7.500v5.500H1.500zM11 11h7.500v5.500H11z" /></svg>{@render caret()}</button>
    </div>

    <form class="dialog" onsubmit={(e) => e.preventDefault()}>
      <div class="dhead">{@render ic('minus', 'i12', '0 0 12 12')}<h2>联接</h2><button type="button" aria-label="展开"><svg viewBox="0 0 14 9"><path fill="#333" d="M0 0l7 4.500L0 9zM7 0l7 4.500L7 9z" /></svg></button></div>
      <div class="dtabs"><button type="button">位置</button><button type="button" class="active">运动</button></div>
      <div class="dbody">
        <div class="row"><label for="type">类型</label><span class="pick">{@render ic('revjoint')}<select id="type"><option>旋转</option></select>{@render caret()}</span></div>
        <div class="row"><label for="rot">旋转</label><span class="pick">{@render ic('zaxis')}<select id="rot"><option>Z 轴</option></select>{@render caret()}</span></div>
        <h3>{@render caret()}联接运动限制</h3>
        {#each limits as l}
          <div class="row lim"><label for={l.id}>{l.label}</label><input type="checkbox" aria-label={l.label} /><input id={l.id} type="text" value="0.0 deg" /></div>
        {/each}
        <div class="row prev"><span>预览运动</span><button type="button" aria-label="播放预览"><svg viewBox="0 0 10 12"><path fill="#555" d="M0 0l10 6-10 6z" /></svg></button></div>
      </div>
      <div class="dfoot"><svg class="info" viewBox="0 0 16 16" aria-hidden="true"><circle cx="8" cy="8" r="8" /><path fill="#fff" d="M6.500 3h3v2.500h-3zM6 6.500h3.500V11H11v1.500H5.500V11H7V8H6z" /></svg><button>确定</button><button type="button">取消</button></div>
    </form>
  </main>

  <footer>
    <div class="play">
      <button aria-label="起点"><svg viewBox="0 0 18 20"><path d="M2 2h2v16H2zM16 2v16L5 10z" /></svg></button>
      <button aria-label="上一步"><svg viewBox="0 0 18 20"><path d="M12 3v14L1 10zM14 6h3v8h-3z" /></svg></button>
      <button aria-label="播放"><svg viewBox="0 0 18 20"><path d="M2 0l15 10L2 20z" /></svg></button>
      <button aria-label="下一步"><svg viewBox="0 0 18 20"><path d="M6 3v14l11-7zM1 6h3v8H1z" /></svg></button>
      <button aria-label="终点"><svg viewBox="0 0 18 20"><path d="M14 2h2v16h-2zM2 2v16l11-8z" /></svg></button>
    </div>
    <div class="timeline">
      {#each runs as [color, n]}<i class="run {color}" class:n2={n === 2} class:n3={n === 3}></i>{/each}
      {#each features as f}<button class="feat" aria-label={f.slice(2)}>{@render ic(f)}</button>{/each}
      {#each features as f}<i class="tick"></i>{/each}
    </div>
    <svg class="head" viewBox="0 0 16 42" aria-hidden="true"><path fill="#666" d="M0 0h16v6l-2 2H2L0 6zM3 9h10l-4 4v29H7V13z" /></svg>
    <button class="cfg" aria-label="时间轴设置">{@render ic('gear')}</button>
  </footer>
</div>

<style>
  :global(body) { margin: 0; }
  .defs { position: absolute; width: 0; height: 0; }
  .app { height: 100vh; display: flex; flex-direction: column; overflow: hidden; background: #f1f1f1; color: #333; font: 14px/20px "Liberation Sans", "Noto Sans CJK SC", sans-serif; }
  .app * { box-sizing: border-box; }
  button { border: 0; background: none; padding: 0; margin: 0; font: inherit; color: inherit; display: flex; align-items: center; justify-content: center; }
  svg { display: block; flex: none; }
  h1, h2, h3 { margin: 0; font: inherit; }
  i { display: block; }
  .i20 { width: 20px; height: 20px; }
  .i40 { width: 40px; height: 40px; }
  .i12 { width: 12px; height: 12px; }
  .caret { width: 7px; height: 6px; }
  .pink { background: #ffadb1; } .yellow { background: #ffd777; } .green { background: #c5f76e; } .blue { background: #5b8dee; }
  .red { background: #ff6371; } .orange { background: #ffb66e; } .olive { background: #d9de55; }

  .title { height: 29px; flex: none; display: flex; align-items: center; gap: 5px; padding: 0 20px 1px 2px; background: #fff; }
  h1 { font: 15px/20px "Open Sans", "Noto Sans CJK SC", sans-serif; color: #999; flex: 1; }
  .window { display: flex; gap: 34px; }
  .window button { width: 24px; height: 24px; }
  .window svg { width: 12px; height: 12px; fill: none; stroke: #888; }

  .tabbar { height: 40px; flex: none; display: flex; align-items: flex-end; background: #cbcbcb; }
  .quick { width: 241px; height: 40px; display: flex; align-items: center; gap: 24px; padding-left: 11px; fill: #5f5f5f; color: #5f5f5f; }
  .quick svg:not(.caret) { width: 18px; height: 20px; }
  .quick .drop { gap: 5px; }
  .quick .drop + .drop { margin-left: -5px; }
  .quick .off { fill: #8f8f8f; color: #8f8f8f; }
  .doctab { flex: 1; height: 35px; display: flex; align-items: center; background: #f1f1f1; border-radius: 5px 5px 0 0; padding-right: 8px; }
  .docname { flex: 1; display: flex; justify-content: center; align-items: center; gap: 6px; font-size: 15px; padding-left: 2px; }
  .doctab button { width: 10px; height: 10px; }
  .doctab button svg { width: 10px; height: 10px; }
  .newtab { width: 35px; height: 35px; margin-left: 5px; background: #bbb; border-radius: 5px 5px 0 0; fill: #777; }
  .newtab svg { width: 16px; height: 16px; }
  .status { height: 40px; width: 239px; display: flex; align-items: center; gap: 21px; padding-left: 15px; fill: #5f5f5f; }
  .status svg { width: 20px; height: 20px; }
  .help { position: relative; }
  .status .badge { position: absolute; left: 0; top: 15px; width: 40px; height: 40px; z-index: 2; }
  .avatar { margin-left: 8px; }
  .status .avatar svg { width: 30px; height: 30px; }

  .ribbon { height: 103px; flex: none; display: flex; margin: 0 2px 3px 0; border: solid #ccc; border-width: 0 1px 1px 0; }
  .design { width: 138px; height: 76px; margin: 13px 6px 0 14px; border: 1px solid #ccc; border-radius: 5px; font-weight: 700; gap: 6px; box-shadow: inset 0 0 0 1px #e2e2e2; }
  .ribmain { display: flex; flex-direction: column; flex: 1; }
  nav { display: flex; gap: 27px; padding-left: 14px; height: 29px; }
  nav button { padding: 1px 15px 0; height: 29px; border-bottom: 3px solid transparent; }
  nav .active { color: #0696d7; border-color: #0696d7; }
  .groups { display: flex; padding-top: 1px; }
  .group { padding: 0 9px; height: 68px; background: linear-gradient(#ccc, #ccc) right 3px / 2px 64px no-repeat; width: 74px; }
  .group.wide { padding: 0 5px 0 6px; width: auto; }
  .group:last-child { background: none; }
  .tools { display: flex; }
  .tool { width: 54px; height: 48px; }
  .on { background: linear-gradient(#0696d7, #0696d7) center / 48px 48px no-repeat; }
  .glabel { width: 100%; gap: 4px; height: 22px; padding-right: 6px; }

  main { flex: 1; position: relative; min-height: 0; overflow: hidden; }
  .scene { width: 100%; height: 100%; }
  .panelhead { display: flex; align-items: center; height: 31px; background: #f1f1f1; border: solid #ccc; border-width: 1px 1px 2px; color: #666; padding: 0 12px 0 5px; }
  .panelhead h2 { flex: 1; }
  .panelhead button:first-child svg { width: 13px; height: 9px; margin-right: 11px; }
  .browser { position: absolute; left: 5px; top: 5px; width: 374px; }
  .notes { position: absolute; left: 5px; bottom: 7px; width: 374px; border-top: 0; padding: 1px 12px 0 29px; }
  ul { list-style: none; margin: 4px 0 0; padding: 0; }
  li { height: 30px; display: flex; align-items: center; }
  .tw { width: 22px; height: 20px; justify-content: flex-start; }
  .tw svg { width: 10px; height: 12px; }
  .box { height: 25px; display: flex; align-items: center; background: #f1f1f1; }
  .bar { width: 6px; height: 25px; }
  .root { padding-left: 22px; }
  .root .tw { width: 25px; }
  .root .bar { width: 4px; height: 20px; margin-right: 4px; }
  .root .box { padding: 0 8px 0 0; }
  .sel { display: flex; align-items: center; height: 20px; background: #999; color: #fff; margin: 0 5px 0 8px; padding-right: 16px; }
  .selic { display: flex; background: #858585; width: 31px; justify-content: center; margin-right: 9px; }
  input[type='radio'] { appearance: none; width: 17px; height: 17px; margin: 0; border: 1px solid #333; border-radius: 50%; background: radial-gradient(#222 0 3px, #e4e7ee 4px, #b4bccb 8px); }
  .l1 { padding-left: 45px; }
  .l1 .tw { width: 23px; }
  .l2 { padding-left: 90px; }
  .cell { display: flex; width: 31px; padding-left: 3px; color: #858585; }
  .name { padding-right: 12px; }
  .doc .cell { width: 34px; padding-left: 1px; }
  .views .cell { width: 40px; }
  .fold .cell + .cell { width: 40px; }
  .fold .name { padding-right: 15px; }
  .comp .cell { padding-left: 4px; width: 34px; }
  .comp .cell + .cell { width: 37px; padding-left: 0; }
  .geo .cell + .cell { width: 41px; padding-left: 4px; }
  .geo .cell { padding-left: 4px; }
  .geo .name { padding-right: 14px; }

  .mini { position: absolute; left: 961px; top: 643px; height: 27px; width: 62px; display: flex; background: #f1f1f1; align-items: center; gap: 12px; padding-left: 4px; }
  .grip { width: 10px; height: 25px; border-right: 1px solid #bbb; background: repeating-linear-gradient(150deg, #ddd 0 1px, #f1f1f1 1px 3px); }
  .mini button { gap: 3px; }
  .navbar { position: absolute; left: 813px; bottom: 8px; height: 30px; width: 296px; display: flex; align-items: center; justify-content: space-between; background: #f1f1f1; padding: 0 6px 0 4px; }
  .navbar svg:not(.caret) { width: 20px; height: 20px; }
  .navbar button { gap: 2px; }
  .navbar .far { gap: 6px; }

  .dialog { position: absolute; right: 6px; top: 125px; width: 344px; background: #f1f1f1; border: 1px solid #ccc; }
  .dhead { display: flex; align-items: center; gap: 5px; height: 30px; padding: 0 4px 0 14px; border-bottom: 2px solid #bbb; color: #666; }
  .dhead h2 { flex: 1; }
  .dhead button svg { width: 13px; height: 9px; }
  .dtabs { display: flex; height: 35px; padding-top: 1px; border-bottom: 2px solid #c4c4c4; color: #555; }
  .dtabs button { width: 48px; padding: 0 4px 2px 0; }
  .dtabs .active { width: 49px; height: 34px; padding: 0 5px 4px 0; background: #f1f1f1; border: solid #bbb; border-width: 1px 1px 0; }
  .dbody { padding: 3px 39px 0 14px; }
  .row { display: flex; align-items: center; height: 34px; margin-bottom: 4px; }
  .row label, .prev span { flex: 1; }
  .pick { position: relative; width: 216px; height: 33px; display: flex; align-items: center; }
  .pick > .i20 { position: absolute; left: 4px; }
  .pick > .caret { position: absolute; right: 7px; pointer-events: none; }
  select { appearance: none; width: 100%; height: 33px; padding: 0 24px 0 27px; border: 1px solid #ccc; border-radius: 0; background: #fff; font: inherit; color: #333; }
  h3 { display: flex; align-items: center; gap: 8px; height: 36px; font-weight: 700; margin-left: -1px; padding-bottom: 4px; }
  h3 .caret { width: 9px; height: 7px; }
  input[type='checkbox'] { appearance: none; width: 17px; height: 17px; margin: 0 8px 0 0; border: 1px solid #444; border-radius: 4px; background: linear-gradient(#fff, #bbb); box-shadow: inset 0 0 0 1px #aaa; }
  input[type='text'] { width: 184px; height: 32px; border: 1px solid #ccc; padding: 0 3px; font: inherit; color: #999; background: #fff; }
  .prev { height: 32px; }
  .prev button { width: 206px; justify-content: flex-start; }
  .prev button svg { width: 10px; height: 12px; }
  .dfoot { display: flex; align-items: center; gap: 12px; height: 44px; padding: 0 13px 0 10px; border-top: 1px solid #333; color: #666; }
  .dfoot .info { width: 16px; height: 16px; margin-right: auto; }
  .dfoot button { width: 75px; height: 26px; border: 1px solid #bbb; background: #e9e9e9; }

  footer { height: 62px; flex: none; display: flex; border-top: 1px solid #ccc; padding: 9px 17px 0 8px; }
  .play { display: flex; width: 172px; gap: 5px; height: 42px; align-items: center; fill: #555; }
  .play button { width: 26px; }
  .play svg { width: 18px; height: 20px; }
  .timeline { display: grid; grid-template-columns: repeat(38, 25px); grid-template-rows: 7px 20px 8px; column-gap: 5px; row-gap: 3px; }
  .n2 { grid-column: span 2; }
  .n3 { grid-column: span 3; }
  .tick { height: 8px; margin-right: -5px; background: linear-gradient(#ccc, #ccc) 11px 0 / 3px 8px no-repeat, linear-gradient(#ccc, #ccc) 0 6px / 100% 2px no-repeat; }
  .tick:last-child { margin-right: 11px; }
  .head { width: 16px; height: 42px; margin: 2px 0 0 -6px; }
  .cfg { margin-left: auto; height: 42px; color: #666; }
</style>
